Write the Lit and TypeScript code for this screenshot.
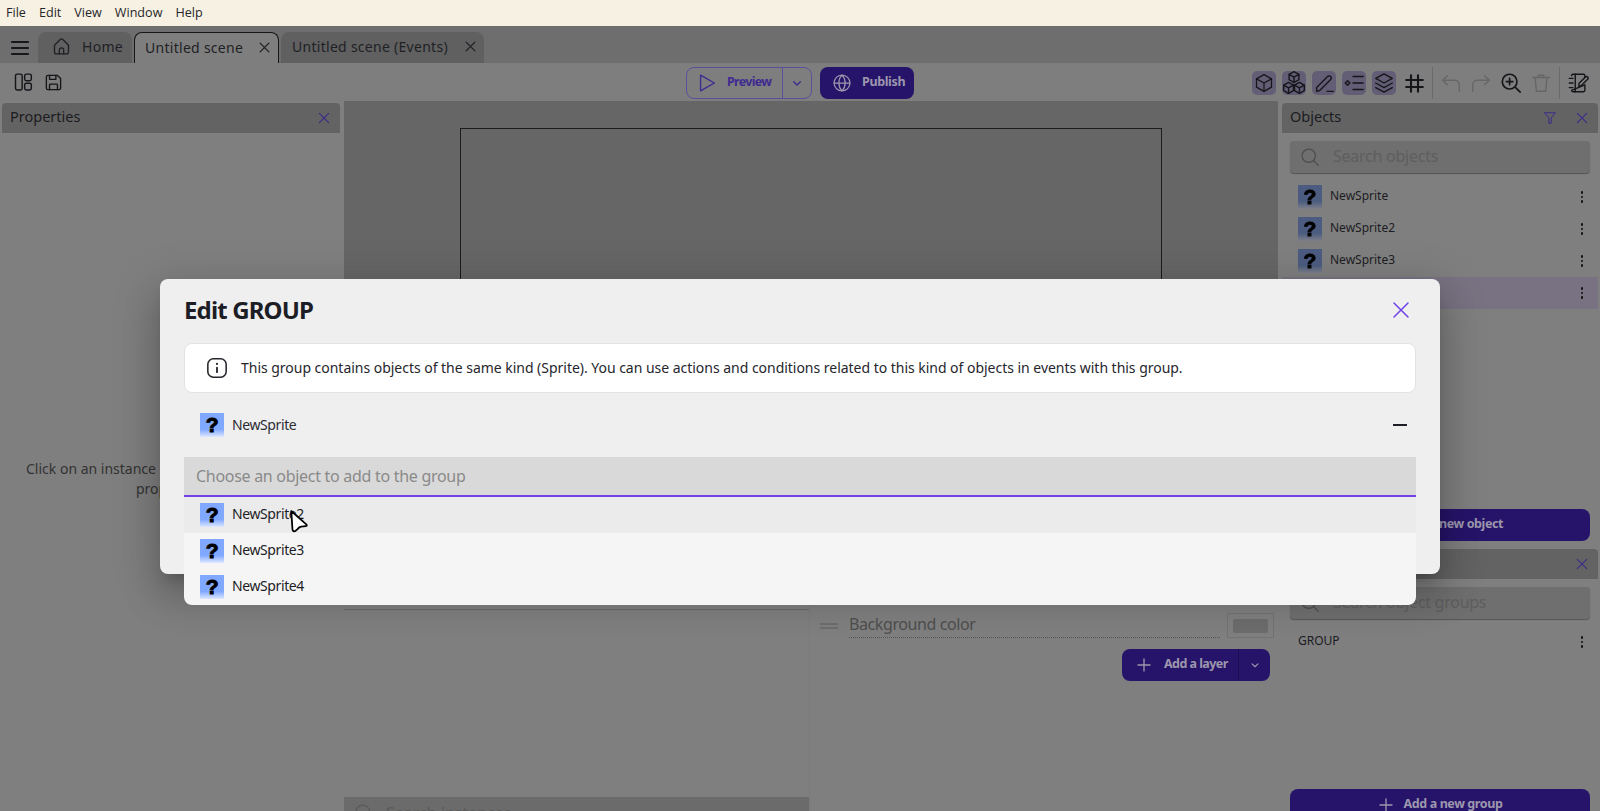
import { LitElement, html, css, svg } from "lit";
import { customElement } from "lit/decorators.js";

const ic = (size: number, body: unknown, sw = 1.5) => html`<svg class="ic" width=${size} height=${size} viewBox="0 0 24 24" fill="none" stroke="currentColor" stroke-width=${sw} stroke-linecap="round" stroke-linejoin="round">${body}</svg>`;

const X = svg`<path d="M5 5 19 19M19 5 5 19"/>`;
const PLUS = svg`<path d="M12 3v18M3 12h18"/>`;
const CHEV = svg`<path d="M7 10l5 5 5-5"/>`;
const SEARCH = svg`<circle cx="10.5" cy="10.5" r="8"/><path d="M16.5 16.5 22 22"/>`;
const thumb = html`<div class="thumb"><span>?</span></div>`;
const dots = html`<div class="dots"><i></i><i></i><i></i></div>`;

@customElement("app-root")
export class AppRoot extends LitElement {
  static styles = css`
    :host { display: block; width: 1600px; height: 811px; position: relative; overflow: hidden; background: #7a7a7a; font-family: "Noto Sans", "Open Sans", sans-serif; color: #1a1a20; }
    .ic { display: block; flex: none; }
    .menu { height: 25px; background: #f7f1e3; display: flex; align-items: center; padding: 0 6px 1px; gap: 13px; font-size: 12.6px; color: #26262a; font-family: "Open Sans", "Noto Sans", sans-serif; }
    .tabs { height: 37px; background: #6e6e6e; display: flex; align-items: flex-end; gap: 2px; padding-left: 38px; position: relative; }
    .burger { position: absolute; left: 11px; top: 13px; color: #17171c; }
    .tab { height: 31px; box-sizing: border-box; background: #606060; border-radius: 8px 8px 0 0; display: flex; align-items: center; font-size: 14px; color: #1f1f25; padding: 0 7px 2px 11px; letter-spacing: .28px; }
    .tab.home { width: 94px; padding-left: 13px; gap: 10px; }
    .tab.scene { width: 145px; background: #7e7e7e; border: 1px solid #15151a; border-bottom: 0; padding-left: 10px; justify-content: space-between; padding-right: 6px; }
    .tab.events { width: 203px; justify-content: space-between; padding-right: 6px; }
    .toolbar { height: 38px; background: #7e7e7e; display: grid; grid-template-columns: 1fr auto 1fr; align-items: center; }
    .tl { display: flex; gap: 6px; padding-left: 11px; color: #15151a; }
    .tc { display: flex; gap: 8px; align-items: center; padding-top: 2px; }
    .tr { display: flex; gap: 6px; justify-content: flex-end; padding-right: 10px; align-items: center; padding-top: 2px; color: #15151a; }
    .tb { width: 24px; height: 24px; border-radius: 5px; display: flex; align-items: center; justify-content: center; }
    .tb.on { background: #635e76; }
    .tb.off { color: #666; }
    .vs { width: 1px; height: 32px; background: #6a6a6a; }
    .preview { width: 126px; height: 32px; box-sizing: border-box; border: 1px solid #5a4f9c; border-radius: 8px; display: flex; align-items: center; color: #3f2a91; font-size: 12.5px; font-weight: 700; letter-spacing: -.7px; }
    .preview .a { width: 96px; display: flex; align-items: center; gap: 9px; padding-left: 9px; box-sizing: border-box; height: 100%; border-right: 1px solid #5a4f9c; }
    .preview .b { flex: 1; display: flex; justify-content: center; }
    .preview span, .btn span { margin-top: -3px; }
    .btn { background: #26146a; border-radius: 8px; color: #9d97ad; font-weight: 700; font-size: 12.5px; display: flex; align-items: center; justify-content: center; box-sizing: border-box; letter-spacing: -.35px; }
    .publish { width: 94px; height: 32px; gap: 10px; justify-content: flex-start; padding-left: 12px; }
    .main { height: 711px; display: grid; grid-template-columns: 344px 934px 322px; overflow: hidden; }
    .left { background: #7f7f7f; padding: 2px 0 0 2px; box-sizing: border-box; overflow: hidden; }
    .phead { height: 30px; background: #636363; border-radius: 4px 4px 0 0; display: flex; align-items: center; padding: 0 8px 4px 8px; gap: 17px; font-size: 14.5px; color: #1c1c22; box-sizing: border-box; }
    .phead .t { flex: 1; }
    .phead .p { color: #3b2a8c; margin-bottom: -4px; }
    .left .phead { width: 338px; }
    .hint { padding-top: 326px; font-size: 14px; line-height: 20px; color: #333; }
    .hint span { display: block; white-space: nowrap; }
    .hint .l1 { padding-left: 24px; }
    .hint .l2 { text-align: center; padding-right: 6px; }
    .center { display: grid; grid-template-rows: 490px 1fr; }
    .canvas { background: #666; padding: 27px 0 0 116px; overflow: hidden; }
    .frame { width: 700px; height: 500px; border: 1px solid #1c1c1c; }
    .bottom { display: grid; grid-template-columns: 465px 1fr; background: #7f7f7f; }
    .inst { padding-top: 18px; display: flex; flex-direction: column; height: 221px; box-sizing: border-box; }
    .inst .line { height: 1px; background: #6a6a6a; }
    .inst .s { margin-top: auto; height: 32px; margin-bottom: -17px; background: #6b6b6b; display: flex; align-items: center; gap: 12px; padding-left: 10px; color: #5a5a5a; font-size: 16px; }
    .layers { padding: 22px 8px 0 10px; display: flex; flex-direction: column; border-left: 1px solid #7b7b7b; }
    .lrow { display: flex; align-items: center; height: 25px; }
    .hdl { width: 18px; height: 6px; border-top: 2px solid #6d6d6d; border-bottom: 2px solid #6d6d6d; margin-right: 11px; box-sizing: border-box; }
    .bg { width: 371px; height: 25px; font-size: 16px; color: #4e4e4e; line-height: 22px; border-bottom: 1px dotted #555; box-sizing: border-box; letter-spacing: -.4px; }
    .sw { width: 47px; height: 25px; margin-left: 7px; border: 1px solid #727272; box-sizing: border-box; display: flex; align-items: center; justify-content: center; }
    .sw i { display: block; width: 35px; height: 14px; background: #6c6c6c; border-radius: 2px; }
    .add { align-self: flex-end; margin: 11px 4px 0 0; width: 148px; height: 32px; justify-content: flex-start; letter-spacing: -.55px; }
    .add .a { width: 117px; display: flex; align-items: center; gap: 12px; padding-left: 14px; box-sizing: border-box; height: 100%; border-right: 1px solid #1a0e4e; }
    .add .b { flex: 1; display: flex; justify-content: center; }
    .right { background: #7f7f7f; padding: 2px 2px 0 4px; display: flex; flex-direction: column; box-sizing: border-box; }
    .sect { height: 438px; display: flex; flex-direction: column; flex: none; }
    .sect.g { height: 272px; margin-top: 8px; }
    .search { margin: 8px 8px 0; height: 32px; background: #6f6f6f; border-radius: 4px; box-shadow: 0 1px 1px #555; display: flex; align-items: center; padding: 0 0 2px 10px; gap: 13px; color: #5e5e5e; font-size: 16px; letter-spacing: -.25px; flex: none; box-sizing: border-box; }
    .search .ic { color: #4d4d4d; margin-bottom: -2px; }
    .list { margin-top: 8px; flex: 1; }
    .row { height: 32px; display: flex; align-items: center; padding: 0 14px 0 16px; gap: 8px; font-size: 12px; color: #1c1c22; }
    .row.sel { background: #787282; }
    .row .n { flex: 1; margin-top: -3px; }
    .row.plain { margin-top: -1px; padding-left: 16px; }
    .row .thumb { filter: brightness(.55) saturate(.75); }
    .dots { display: flex; flex-direction: column; gap: 2px; width: 3px; }
    .dots i { width: 2.4px; height: 2.4px; background: #111; border-radius: 50%; display: block; }
    .wide { margin: 0 8px; height: 32px; gap: 10px; flex: none; letter-spacing: -.4px; }
    .thumb { width: 24px; height: 24px; flex: none; background: linear-gradient(#80a8ff 0, #80a8ff 68%, #dfe8ff 100%); display: flex; align-items: center; justify-content: center; color: #000; font: 900 21px/24px "Liberation Sans", "Noto Sans", sans-serif; -webkit-text-stroke: 1px #000; }
    .overlay { position: absolute; left: 0; top: 25px; right: 0; bottom: 0; }
    .modal { position: absolute; left: 160px; top: 254px; width: 1280px; height: 295px; box-sizing: border-box; background: #efefef; border-radius: 8px; padding: 0 24px; box-shadow: 0 11px 15px -7px rgba(0,0,0,.2), 0 24px 38px 3px rgba(0,0,0,.14), 0 9px 46px 8px rgba(0,0,0,.12); }
    .mh { height: 64px; display: flex; align-items: center; justify-content: space-between; padding: 0 3px 2px 0; box-sizing: border-box; }
    .mh h2 { margin: -2px 0 0; font-size: 24px; font-weight: 700; color: #1d1d26; letter-spacing: -.85px; }
    .mh .c { color: #6f43e8; }
    .banner { height: 50px; box-sizing: border-box; background: #fff; border: 1px solid #e3e3e3; border-radius: 8px; display: flex; align-items: center; padding-left: 21px; gap: 13px; font-size: 14px; color: #26262c; letter-spacing: -.026px; }
    .banner span { margin-top: -2px; }
    .m-row { height: 50px; margin-top: 7px; display: flex; align-items: center; padding-left: 16px; gap: 8px; font-size: 14px; color: #2c2c34; letter-spacing: -.4px; }
    .m-row .n { flex: 1; margin-top: -2px; }
    .minus { width: 14px; height: 1.5px; background: #1d1d26; margin-right: 9px; }
    .input { height: 40px; margin-top: 7px; box-sizing: border-box; background: #d9d9d9; border-bottom: 2px solid #6f43e8; display: flex; align-items: center; padding-left: 12px; font-size: 16px; color: #8a8a8a; letter-spacing: -.29px; }
    .dd { position: absolute; left: 24px; right: 24px; top: 218px; background: #f5f5f5; border-radius: 0 0 8px 8px; overflow: hidden; z-index: 2; }
    .opt { height: 36px; display: flex; align-items: center; padding-left: 16px; gap: 8px; font-size: 14px; color: #1d1d26; letter-spacing: -.4px; }
    .opt span.n { margin-top: -4px; }
    .opt.hl { background: #ebebeb; }
    .cursor { position: absolute; left: 285px; top: 481px; z-index: 3; }
  `;

  render() {
    return html`
      <div class="menu"><span>File</span><span>Edit</span><span>View</span><span>Window</span><span>Help</span></div>
      <div class="tabs">
        <div class="burger">${ic(18, svg`<path d="M1 4h22M1 12h22M1 20h22" />`, 2.4)}</div>
        <div class="tab home">${ic(21, svg`<path d="M4 10.5 10.5 4a2 2 0 0 1 3 0L20 10.5V18a2.5 2.5 0 0 1-2.5 2.5h-11A2.5 2.5 0 0 1 4 18z"/><path d="M9.5 20.5V16a2.5 2.5 0 0 1 5 0v4.5"/>`)}<span>Home</span></div>
        <div class="tab scene"><span>Untitled scene</span>${ic(15, X, 2)}</div>
        <div class="tab events"><span>Untitled scene (Events)</span>${ic(15, X, 2)}</div>
      </div>
      <div class="toolbar">
        <div class="tl">
          <div class="tb">${ic(20, svg`<rect x="3" y="2.5" width="8" height="19" rx="2"/><rect x="14" y="2.5" width="8" height="8" rx="2"/><rect x="14" y="13.5" width="8" height="8" rx="2"/>`, 1.7)}</div>
          <div class="tb">${ic(19, svg`<path d="M3 5a2 2 0 0 1 2-2h12l4 4v12a2 2 0 0 1-2 2H5a2 2 0 0 1-2-2z"/><path d="M7 3v5h8V3M7 21v-6a1 1 0 0 1 1-1h8a1 1 0 0 1 1 1v6"/>`, 1.7)}</div>
        </div>
        <div class="tc">
          <div class="preview">
            <div class="a">${ic(22, svg`<path d="M5 3.5v17L20 12z"/>`)}<span>Preview</span></div>
            <div class="b">${ic(16, CHEV, 2)}</div>
          </div>
          <div class="btn publish">${ic(20, svg`<circle cx="12" cy="12" r="9.5"/><path d="M2.5 12h19M12 2.5c-5 5-5 14 0 19M12 2.5c5 5 5 14 0 19"/>`)}<span>Publish</span></div>
        </div>
        <div class="tr">
          <div class="tb on">${ic(20, svg`<path d="M12 2 21 7v10l-9 5-9-5V7z"/><path d="M3 7l9 5 9-5M12 12v10"/>`)}</div>
          <div class="tb on">${ic(26, svg`<path d="M12 1.5 16.5 4v5L12 11.5 7.5 9V4z"/><path d="M7.5 4 12 6.5 16.5 4M12 6.5v5"/><path d="M7 11.5l4.5 2.5v5L7 21.5 2.5 19v-5z"/><path d="M2.5 14 7 16.5 11.5 14M7 16.5v5"/><path d="M17 11.5l4.5 2.5v5L17 21.5 12.5 19v-5z"/><path d="M12.5 14l4.5 2.5 4.5-2.5M17 16.5v5"/>`, 1.3)}</div>
          <div class="tb on">${ic(21, svg`<path d="M3 21v-4.5L15.5 4a2.4 2.4 0 0 1 3.5 3.5L6.5 20z"/><path d="M15 21h7"/>`)}</div>
          <div class="tb on">${ic(22, svg`<path d="M5 9.5 7.5 12 5 14.5 2.5 12z"/><path d="M11 5h11M11 12h11M11 19h11"/>`, 1.6)}</div>
          <div class="tb on">${ic(22, svg`<path d="M12 2 21 7l-9 5-9-5z"/><path d="M3 12l9 5 9-5M3 17l9 5 9-5"/>`)}</div>
          <div class="tb">${ic(21, svg`<path d="M8 2.5v19M16 2.5v19M2.5 8h19M2.5 16h19"/>`, 2.4)}</div>
          <div class="vs"></div>
          <div class="tb off">${ic(22, svg`<path d="M8 4 3 9l5 5"/><path d="M3 9h13a5 5 0 0 1 5 5v7"/>`)}</div>
          <div class="tb off">${ic(22, svg`<path d="M16 4l5 5-5 5"/><path d="M21 9H8a5 5 0 0 0-5 5v7"/>`)}</div>
          <div class="tb">${ic(22, svg`<circle cx="10.5" cy="10.5" r="8"/><path d="M16.5 16.5 22 22M10.5 7v7M7 10.5h7"/>`, 1.8)}</div>
          <div class="tb off">${ic(22, svg`<path d="M3 6h18M9 6V3.5h6V6M5.5 6l1.5 15h10l1.5-15"/>`)}</div>
          <div class="vs"></div>
          <div class="tb">${ic(22, svg`<path d="M5 4a1.5 1.5 0 0 1 1.5-1.5H18a1.5 1.5 0 0 1 1.5 1.5v2M19.5 14v6a1.5 1.5 0 0 1-1.5 1.5H6.5A1.5 1.5 0 0 1 5 20z"/><path d="M2.5 7h4M2.5 12h4M2.5 17h4M9 2.5v19"/><path d="M13 16v-3.5L20 5.5a1.7 1.7 0 0 1 2.5 2.5L15.5 15z"/>`)}</div>
        </div>
      </div>
      <div class="main">
        <div class="left">
          <div class="phead"><span class="t">Properties</span><span class="p">${ic(16, X, 1.6)}</span></div>
          <div class="hint"><span class="l1">Click on an instance in the canvas to display its</span><span class="l2">properties</span></div>
        </div>
        <div class="center">
          <div class="canvas"><div class="frame"></div></div>
          <div class="bottom">
            <div class="inst">
              <div class="line"></div>
              <div class="s">${ic(20, SEARCH)}<span>Search instances</span></div>
            </div>
            <div class="layers">
              <div class="lrow"><div class="hdl"></div><div class="bg">Background color</div><div class="sw"><i></i></div></div>
              <div class="btn add">
                <div class="a">${ic(16, PLUS, 2)}<span>Add a layer</span></div>
                <div class="b">${ic(14, CHEV, 2)}</div>
              </div>
            </div>
          </div>
        </div>
        <div class="right">
          <div class="sect">
            <div class="phead"><span class="t">Objects</span><span class="p">${ic(14, svg`<path d="M3 3h18l-7 9v9h-4v-9z"/>`, 1.7)}</span><span class="p">${ic(16, X, 1.6)}</span></div>
            <div class="search">${ic(20, SEARCH)}<span>Search objects</span></div>
            <div class="list">
              ${["NewSprite", "NewSprite2", "NewSprite3"].map((n) => html`<div class="row">${thumb}<span class="n">${n}</span>${dots}</div>`)}
              <div class="row sel">${thumb}<span class="n">NewSprite4</span>${dots}</div>
            </div>
            <div class="btn wide">${ic(16, PLUS, 2)}<span>Add a new object</span></div>
          </div>
          <div class="sect g">
            <div class="phead"><span class="t">Object Groups</span><span class="p">${ic(16, X, 1.6)}</span></div>
            <div class="search">${ic(20, SEARCH)}<span>Search object groups</span></div>
            <div class="list">
              <div class="row plain"><span class="n">GROUP</span>${dots}</div>
            </div>
            <div class="btn wide">${ic(16, PLUS, 2)}<span>Add a new group</span></div>
          </div>
        </div>
      </div>
      <div class="overlay">
        <div class="modal">
          <div class="mh"><h2>Edit GROUP</h2><span class="c">${ic(24, X, 1.5)}</span></div>
          <div class="banner">${ic(22, svg`<rect x="2" y="2" width="20" height="20" rx="6"/><path d="M12 11.5v5" stroke-width="2"/><path d="M12 7.5v.1" stroke-width="2.4"/>`, 1.7)}<span>This group contains objects of the same kind (Sprite). You can use actions and conditions related to this kind of objects in events with this group.</span></div>
          <div class="m-row">${thumb}<span class="n">NewSprite</span><div class="minus"></div></div>
          <div class="input">Choose an object to add to the group</div>
          <div class="dd">
            <div class="opt hl">${thumb}<span class="n">NewSprite2</span></div>
            <div class="opt">${thumb}<span class="n">NewSprite3</span></div>
            <div class="opt">${thumb}<span class="n">NewSprite4</span></div>
          </div>
        </div>
        <svg class="cursor" width="27" height="29" viewBox="0 0 24 26"><path d="M5.5 4.5 19 16.5c.8.8.4 1.5-.6 1.6l-4 .4c-1.5.2-2.2.8-3.3 2.2l-2 1.8c-1 .6-2.4 0-2.5-1.4z" fill="#fff" stroke="#000" stroke-width="1.6" stroke-linejoin="round"/></svg>
      </div>
    `;
  }
}
